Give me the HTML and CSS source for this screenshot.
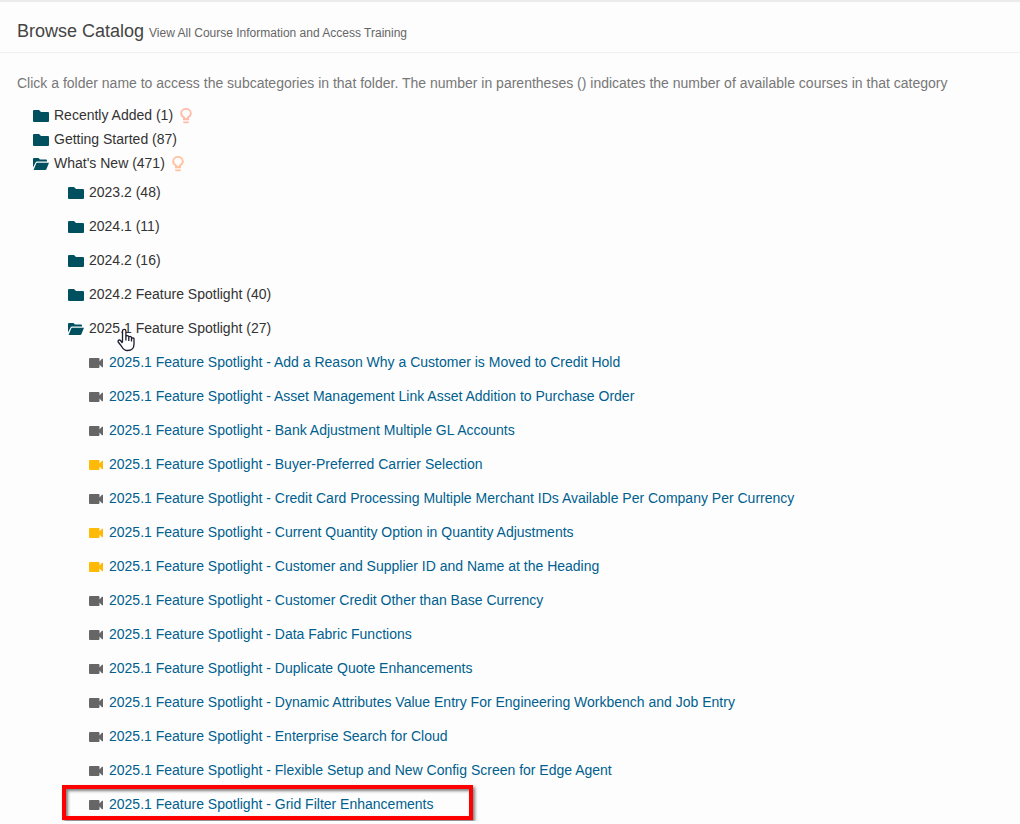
FILE: index.html
```
<!DOCTYPE html>
<html lang="en">
<head>
    <meta charset="UTF-8">
    <meta name="viewport" content="width=device-width, initial-scale=1.0">
    <title>Browse Catalog</title>
    <link rel="stylesheet" href="styles.css">
</head>
<body>
    <svg class="icon-defs" aria-hidden="true">
        <symbol id="folder" viewBox="0 0 16 12">
            <path d="M1 0h5l2 2h7a1 1 0 0 1 1 1v8a1 1 0 0 1-1 1H1a1 1 0 0 1-1-1V1a1 1 0 0 1 1-1z"/>
        </symbol>
        <symbol id="folder-open" viewBox="0 0 16 12">
            <path d="M1 0h4.500l1.500 1.500h6a1 1 0 0 1 1 1V3.500H4.200a2 2 0 0 0-1.800 1.200L0 9.600V1a1 1 0 0 1 1-1z"/>
            <path d="M4.200 4.800H16L13.400 11.200a1.300 1.300 0 0 1-1.200.8H.6L3.200 5.500a1.200 1.200 0 0 1 1-.7z"/>
        </symbol>
        <symbol id="bulb" viewBox="0 0 12 16">
            <path d="M4 11V9.300C2.200 8.400 1.200 7.200 1.200 5.500a4.800 4.600 0 0 1 9.600 0c0 1.700-1 2.900-2.800 3.800V11z" fill="none" stroke="currentColor" stroke-width="1.900"/>
            <path d="M3 10.500h6v1.700H3zM3 13.400h6v.8l-1 1H4l-1-1z"/>
        </symbol>
        <symbol id="video" viewBox="0 0 14 10">
            <path d="M0 1a1 1 0 0 1 1-1h8.500a1 1 0 0 1 1 1v2.500L13 .8h1v8.400h-1l-2.500-2.700V9a1 1 0 0 1-1 1H1a1 1 0 0 1-1-1z"/>
        </symbol>
    </svg>

    <header class="page-header">
        <h1>Browse Catalog <small>View All Course Information and Access Training</small></h1>
    </header>

    <main>
        <p class="intro">Click a folder name to access the subcategories in that folder. The number in parentheses () indicates the number of available courses in that category</p>

        <ul class="catalog">
            <li>
                <button class="folder"><svg class="folder-icon"><use href="#folder"/></svg>Recently Added (1)<svg class="bulb"><use href="#bulb"/></svg></button>
            </li>
            <li>
                <button class="folder"><svg class="folder-icon"><use href="#folder"/></svg>Getting Started (87)</button>
            </li>
            <li>
                <button class="folder" aria-expanded="true"><svg class="folder-icon"><use href="#folder-open"/></svg>What's New (471)<svg class="bulb orange"><use href="#bulb"/></svg></button>
                <ul class="subfolders">
                    <li><button class="folder"><svg class="folder-icon"><use href="#folder"/></svg>2023.2 (48)</button></li>
                    <li><button class="folder"><svg class="folder-icon"><use href="#folder"/></svg>2024.1 (11)</button></li>
                    <li><button class="folder"><svg class="folder-icon"><use href="#folder"/></svg>2024.2 (16)</button></li>
                    <li><button class="folder"><svg class="folder-icon"><use href="#folder"/></svg>2024.2 Feature Spotlight (40)</button></li>
                    <li>
                        <button class="folder" aria-expanded="true"><svg class="folder-icon"><use href="#folder-open"/></svg>2025.1 Feature Spotlight (27)
                            <svg class="pointer" viewBox="0 0 18 24"><path d="M5.500 14V3a1.700 1.700 0 0 1 3.400 0v6.500V8.700a1.500 1.500 0 0 1 2.900 0v1.300V9.500a1.400 1.400 0 0 1 2.700 0v1.300a1.300 1.300 0 0 1 2.500 0V16c0 4-2.500 6.500-6.500 6.500-3 0-4.500-1.500-5.700-3.800L1.200 14c-.6-1.800 1.300-2.500 2.300-1.500l2 2.500M8.900 9v3.500M11.800 9.500v3.500M14.500 10.500v3"/></svg>
                        </button>
                        <ul class="courses">
                            <li><svg class="video"><use href="#video"/></svg><a href="#">2025.1 Feature Spotlight - Add a Reason Why a Customer is Moved to Credit Hold</a></li>
                            <li><svg class="video"><use href="#video"/></svg><a href="#">2025.1 Feature Spotlight - Asset Management Link Asset Addition to Purchase Order</a></li>
                            <li><svg class="video"><use href="#video"/></svg><a href="#">2025.1 Feature Spotlight - Bank Adjustment Multiple GL Accounts</a></li>
                            <li><svg class="video started"><use href="#video"/></svg><a href="#">2025.1 Feature Spotlight - Buyer-Preferred Carrier Selection</a></li>
                            <li><svg class="video"><use href="#video"/></svg><a href="#">2025.1 Feature Spotlight - Credit Card Processing Multiple Merchant IDs Available Per Company Per Currency</a></li>
                            <li><svg class="video started"><use href="#video"/></svg><a href="#">2025.1 Feature Spotlight - Current Quantity Option in Quantity Adjustments</a></li>
                            <li><svg class="video started"><use href="#video"/></svg><a href="#">2025.1 Feature Spotlight - Customer and Supplier ID and Name at the Heading</a></li>
                            <li><svg class="video"><use href="#video"/></svg><a href="#">2025.1 Feature Spotlight - Customer Credit Other than Base Currency</a></li>
                            <li><svg class="video"><use href="#video"/></svg><a href="#">2025.1 Feature Spotlight - Data Fabric Functions</a></li>
                            <li><svg class="video"><use href="#video"/></svg><a href="#">2025.1 Feature Spotlight - Duplicate Quote Enhancements</a></li>
                            <li><svg class="video"><use href="#video"/></svg><a href="#">2025.1 Feature Spotlight - Dynamic Attributes Value Entry For Engineering Workbench and Job Entry</a></li>
                            <li><svg class="video"><use href="#video"/></svg><a href="#">2025.1 Feature Spotlight - Enterprise Search for Cloud</a></li>
                            <li><svg class="video"><use href="#video"/></svg><a href="#">2025.1 Feature Spotlight - Flexible Setup and New Config Screen for Edge Agent</a></li>
                            <li class="highlighted"><svg class="video"><use href="#video"/></svg><a href="#">2025.1 Feature Spotlight - Grid Filter Enhancements</a></li>
                        </ul>
                    </li>
                </ul>
            </li>
        </ul>
    </main>
</body>
</html>
```
FILE: styles.css
```
* {
    margin: 0;
    padding: 0;
    box-sizing: border-box;
}
body {
    font-family: "Liberation Sans", Arial, sans-serif;
    font-size: 14px;
    line-height: 20px;
    color: #333;
    background-color: #fdfdfd;
    border-top: 2px solid #ebebeb;
}
ul {
    list-style: none;
}
svg {
    fill: currentColor;
    flex: none;
}
.icon-defs {
    display: none;
}
.page-header {
    padding: 16px 17px 6px;
    border-bottom: 1px solid #f0f0f0;
}
.page-header h1 {
    font-size: 18px;
    font-weight: normal;
    line-height: 26px;
    color: #444;
}
.page-header small {
    font-size: 12px;
    color: #666;
}
main {
    padding: 20px 17px 0;
}
.intro {
    color: #777;
    margin-bottom: 10px;
}
.catalog {
    padding-left: 16px;
}
.folder {
    position: relative;
    display: flex;
    align-items: center;
    height: 24px;
    border: none;
    background: none;
    font: inherit;
    color: #333;
    white-space: nowrap;
    cursor: pointer;
}
.folder-icon {
    width: 16px;
    height: 12px;
    margin: 2px 5px 0 0;
    color: #00505f;
}
.bulb {
    width: 12px;
    height: 16px;
    margin: 2px 0 0 7px;
    color: #ffbcab;
}
.bulb.orange {
    color: #ffc3a0;
}
.subfolders {
    padding-left: 35px;
}
.subfolders .folder {
    height: 34px;
}
.courses {
    padding-left: 21px;
}
.courses li {
    position: relative;
    display: flex;
    align-items: center;
    height: 34px;
    white-space: nowrap;
}
.video {
    width: 14px;
    height: 10px;
    margin: 2px 6px 0 0;
    color: #666;
}
.video.started {
    color: #ffba08;
}
a {
    color: #005f8f;
    text-decoration: none;
}
a:hover {
    text-decoration: underline;
}
.highlighted::after {
    content: "";
    position: absolute;
    top: -2px;
    left: -27px;
    box-sizing: border-box;
    width: 411px;
    height: 35px;
    border: 4px solid #f00;
    box-shadow: 2px 2px 3px rgba(0, 0, 0, 0.5), inset 2px 2px 3px rgba(0, 0, 0, 0.5);
    pointer-events: none;
}
/* hand cursor over the open folder */
.pointer {
    position: absolute;
    top: 17px;
    left: 49px;
    width: 18px;
    height: 24px;
    fill: #fff;
    stroke: #1c1c30;
    stroke-width: 1.3;
    stroke-linejoin: round;
}
```
